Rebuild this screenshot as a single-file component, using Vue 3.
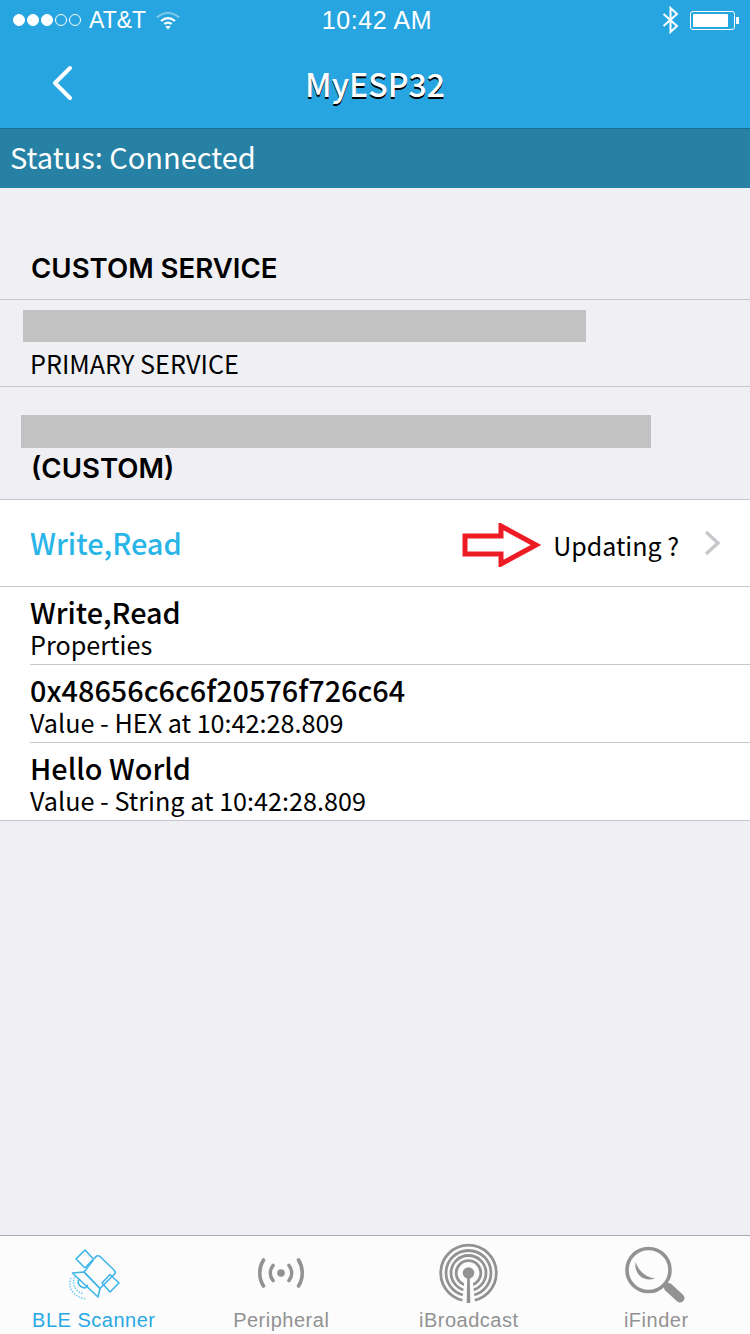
<template>
  <div class="screen">
    <header class="top">
      <div class="statusbar">
        <div class="sb-left">
          <span class="signal">
            <i v-for="n in 3" :key="'on' + n" class="dot on"></i>
            <i v-for="n in 2" :key="'off' + n" class="dot"></i>
          </span>
          <span class="carrier">AT&amp;T</span>
          <svg class="wifi" width="26" height="20" viewBox="0 0 26 20" fill="none" stroke="#fff">
            <path d="M2 7.500 C8.500 1.500 17.500 1.500 24 7.500" stroke-width="2" opacity="0.4" />
            <path d="M6 11 C10.500 7.200 15.500 7.200 20 11" stroke-width="2.200" />
            <path d="M9.400 14 C11.600 12.400 14.400 12.400 16.600 14" stroke-width="2.200" />
            <path d="M13 19.500 L10.400 16.600 C12 15.600 14 15.600 15.600 16.600 Z" fill="#fff" stroke="none" />
          </svg>
        </div>
        <div class="sb-time">10:42 AM</div>
        <div class="sb-right">
          <svg width="17" height="28" viewBox="0 0 17 28" fill="none" stroke="#fff" stroke-width="2">
            <path d="M1.500 8 L15 20 L8.500 26 V2 L15 8 L1.500 20" />
          </svg>
          <span class="battery"><span class="battery-fill"></span></span>
          <span class="battery-cap"></span>
        </div>
      </div>
      <div class="navbar">
        <svg class="back" width="24" height="36" viewBox="0 0 24 36" fill="none" stroke="#fff" stroke-width="4" stroke-linecap="round" stroke-linejoin="round">
          <path d="M20 3 L5 18 L20 33" />
        </svg>
        <div class="nav-title">MyESP32</div>
      </div>
    </header>
    <div class="conn">Status: Connected</div>

    <main class="content">
      <section class="service-head">CUSTOM SERVICE</section>
      <section class="primary">
        <div class="redact redact-a"></div>
        <div class="primary-label">PRIMARY SERVICE</div>
      </section>
      <section class="custom">
        <div class="redact redact-b"></div>
        <div class="custom-label">(CUSTOM)</div>
      </section>

      <section class="panel">
        <div class="action">
          <span class="action-name">Write,Read</span>
          <span class="action-right">
            <span class="updating">Updating ?</span>
            <svg width="18" height="26" viewBox="0 0 18 26" fill="none" stroke="#c8c8cc" stroke-width="3.400">
              <path d="M3 2 L15 13 L3 24" />
            </svg>
          </span>
          <svg class="arrow" width="80" height="44" viewBox="0 0 80 44" fill="#fff" stroke="#ed1c24" stroke-width="5">
            <path d="M3 13 H39 V3 L74 22 L39 41 V31 H3 Z" />
          </svg>
        </div>
        <div v-for="row in rows" :key="row.sub" class="row">
          <div class="row-main">{{ row.main }}</div>
          <div class="row-sub">{{ row.sub }}</div>
        </div>
      </section>
    </main>

    <nav class="tabs">
      <div v-for="tab in tabs" :key="tab.name" class="tab" :class="{ active: tab.active }">
        <svg v-if="tab.name === 'BLE Scanner'" class="tab-icon" viewBox="0 0 70 62" fill="none" stroke="#3fb4ea" stroke-width="1.600" stroke-linejoin="round">
          <path d="M34.500 18 L26 27 L17 18 L26 9 Z" />
          <path d="M37 15.500 C38.500 14.500 40 14.500 41 15.500 L55 29 C56.500 30.500 56.500 32 55.500 33 L41 47.500 L25 31 Z" />
          <path d="M43 42 L51 33.500 L60 42 L51 51 Z" />
          <path d="M13.500 32 L25 31 L41 47.500 L39 56 Z" />
          <path d="M26 27 L37 38 M34.500 18 L45 29" stroke="#fff" stroke-width="1" stroke-dasharray="1.500 1.500" />
          <path d="M20 38 C18 42 20 46 26 47 L29 44" />
          <path d="M16 36 C12 42 16 51 25 53 M12 37 C8 46 14 56 27 58" stroke-width="1.400" stroke-dasharray="1.400 1.400" opacity="0.8" />
        </svg>
        <svg v-else-if="tab.name === 'Peripheral'" class="tab-icon" viewBox="0 0 70 62" fill="none" stroke="#929292" stroke-width="3.600" stroke-linecap="round">
          <circle cx="35" cy="32" r="3.800" fill="#929292" stroke="none" />
          <path d="M27 24.500 C23.500 29 23.500 35 27 39.500 M43 24.500 C46.500 29 46.500 35 43 39.500" />
          <path d="M17.500 19 C12.500 26.500 12.500 37.500 17.500 45 M52.500 19 C57.500 26.500 57.500 37.500 52.500 45" />
        </svg>
        <svg v-else-if="tab.name === 'iBroadcast'" class="tab-icon" viewBox="0 0 70 62" fill="none" stroke="#929292" stroke-width="2.800">
          <circle cx="34.500" cy="32" r="5.800" fill="#929292" stroke="none" />
          <circle cx="34.500" cy="32" r="12.300" />
          <circle cx="34.500" cy="32" r="17.500" />
          <circle cx="34.500" cy="32" r="22.500" />
          <circle cx="34.500" cy="32" r="27.800" />
          <path d="M30.500 38 H38.500 L41 62 H28 Z" fill="#fcfcfc" stroke="none" />
          <path d="M33.200 36 H35.800 L36.300 62 H32.700 Z" fill="#929292" stroke="none" />
        </svg>
        <svg v-else class="tab-icon" viewBox="0 0 70 62" fill="none" stroke="#929292" stroke-width="3.600">
          <circle cx="27.500" cy="29" r="21.500" />
          <path d="M14.500 21 C13 34 23 41 34 37.500 C25 36 18 31 14.500 21 Z" fill="#929292" stroke="none" />
          <path d="M43 44 L48 48" stroke-width="2.800" />
          <path d="M47.500 46.500 L59 57" stroke-width="9" stroke-linecap="round" />
        </svg>
        <span class="tab-label">{{ tab.name }}</span>
      </div>
    </nav>
  </div>
</template>

<script setup>
const rows = [
  { main: 'Write,Read', sub: 'Properties' },
  { main: '0x48656c6c6f20576f726c64', sub: 'Value - HEX at 10:42:28.809' },
  { main: 'Hello World', sub: 'Value - String at 10:42:28.809' }
]

const tabs = [
  { name: 'BLE Scanner', active: true },
  { name: 'Peripheral', active: false },
  { name: 'iBroadcast', active: false },
  { name: 'iFinder', active: false }
]
</script>

<style>
html, body {
  margin: 0;
  background: #efeff4;
}
</style>

<style scoped>
.screen {
  width: 750px;
  height: 1334px;
  display: flex;
  flex-direction: column;
  background: #efeff4;
  font-family: "Noto Sans CJK JP", "Noto Sans", sans-serif;
  color: #000;
  overflow: hidden;
}
.top {
  height: 128px;
  background: #26a5e0;
  color: #fff;
  flex: none;
}
.statusbar {
  height: 40px;
  position: relative;
  display: flex;
  align-items: center;
  justify-content: space-between;
  font-family: "Liberation Sans", sans-serif;
  font-size: 24px;
}
.sb-left {
  display: flex;
  align-items: center;
  padding-left: 13px;
}
.signal {
  display: flex;
  gap: 2px;
}
.dot {
  width: 10px;
  height: 10px;
  border: 1px solid #fff;
  border-radius: 50%;
  display: block;
}
.dot.on {
  background: #fff;
}
.carrier {
  margin-left: 8px;
  font-size: 23px;
}
.wifi {
  margin-left: 9px;
}
.sb-time {
  position: absolute;
  left: 4px;
  right: 0;
  text-align: center;
  font-size: 25px;
  letter-spacing: 0.6px;
}
.sb-right {
  display: flex;
  align-items: center;
  padding-right: 11px;
}
.battery {
  box-sizing: border-box;
  width: 45px;
  height: 19px;
  margin-left: 11px;
  border: 1px solid #fff;
  border-radius: 3px;
  padding: 2px;
  display: block;
}
.battery-fill {
  display: block;
  width: 35px;
  height: 13px;
  background: #fff;
  border-radius: 1px;
}
.battery-cap {
  width: 3px;
  height: 7px;
  margin-left: 1px;
  background: #fff;
}
.navbar {
  height: 88px;
  position: relative;
  display: flex;
  align-items: flex-start;
  justify-content: center;
}
.back {
  position: absolute;
  left: 50px;
  top: 25px;
}
.nav-title {
  font-size: 32px;
  line-height: 88px;
  height: 88px;
  margin-top: -1px;
  font-weight: 500;
  text-shadow: 0 2px 0 #000;
}
.conn {
  height: 60px;
  flex: none;
  box-sizing: border-box;
  border-top: 1px solid #1c6e90;
  background: #2681a5;
  color: #fff;
  font-size: 29px;
  line-height: 54px;
  padding-left: 10px;
}
.content {
  flex: 1;
}
.service-head {
  height: 112px;
  box-sizing: border-box;
  padding: 59px 0 0 31px;
  font-family: Inter, "Noto Sans", sans-serif;
  font-size: 27.600px;
  line-height: 42px;
  font-weight: 600;
  border-bottom: 1px solid #c8c7cc;
}
.primary {
  height: 87px;
  box-sizing: border-box;
  padding-top: 10px;
  border-bottom: 1px solid #c8c7cc;
}
.redact {
  background: #c2c2c2;
}
.redact-a {
  width: 563px;
  height: 32px;
  margin-left: 23px;
}
.primary-label {
  padding-left: 30px;
  margin-top: 2px;
  font-size: 25.200px;
  line-height: 38px;
}
.custom {
  height: 113px;
  box-sizing: border-box;
  padding-top: 28px;
  border-bottom: 1px solid #c8c7cc;
}
.redact-b {
  width: 630px;
  height: 33px;
  margin-left: 21px;
}
.custom-label {
  padding-left: 31px;
  margin-top: 0;
  font-family: Inter, "Noto Sans", sans-serif;
  font-size: 27.600px;
  line-height: 40px;
  font-weight: 600;
}
.panel {
  background: #fff;
  border-bottom: 1px solid #c8c7cc;
}
.action {
  height: 87px;
  box-sizing: border-box;
  position: relative;
  display: flex;
  align-items: center;
  justify-content: space-between;
  padding: 0 29px 0 30px;
  border-bottom: 1px solid #c8c7cc;
}
.action-name {
  color: #29b5e8;
  font-size: 29px;
  font-weight: 500;
  line-height: 44px;
  margin-top: -2px;
}
.action-right {
  display: flex;
  align-items: center;
  gap: 24px;
}
.updating {
  font-size: 25px;
  line-height: 40px;
  margin-top: 4px;
}
.arrow {
  position: absolute;
  left: 462px;
  top: 23px;
}
.row {
  height: 78px;
  box-sizing: border-box;
  padding: 6px 0 0 30px;
  position: relative;
}
.row:last-child {
  height: 77px;
}
.row:not(:last-child)::after {
  content: "";
  position: absolute;
  left: 30px;
  right: 0;
  bottom: 0;
  height: 1px;
  background: #c8c7cc;
}
.row-main {
  font-size: 28.800px;
  line-height: 37px;
  font-weight: 500;
}
.row-sub {
  font-size: 25.200px;
  line-height: 28px;
}
.tabs {
  height: 99px;
  flex: none;
  box-sizing: border-box;
  border-top: 1px solid #a9a9ad;
  background: #fcfcfc;
  display: grid;
  grid-template-columns: repeat(4, 1fr);
}
.tab {
  display: flex;
  flex-direction: column;
  align-items: center;
  color: #929292;
  font-family: "Liberation Sans", sans-serif;
  font-size: 20px;
}
.tab.active {
  color: #29a9e4;
}
.tab-icon {
  width: 70px;
  height: 62px;
  margin-top: 5px;
  flex: none;
  overflow: visible;
}
.tab-label {
  margin-top: 5px;
  letter-spacing: 0.5px;
  line-height: 24px;
}
</style>
